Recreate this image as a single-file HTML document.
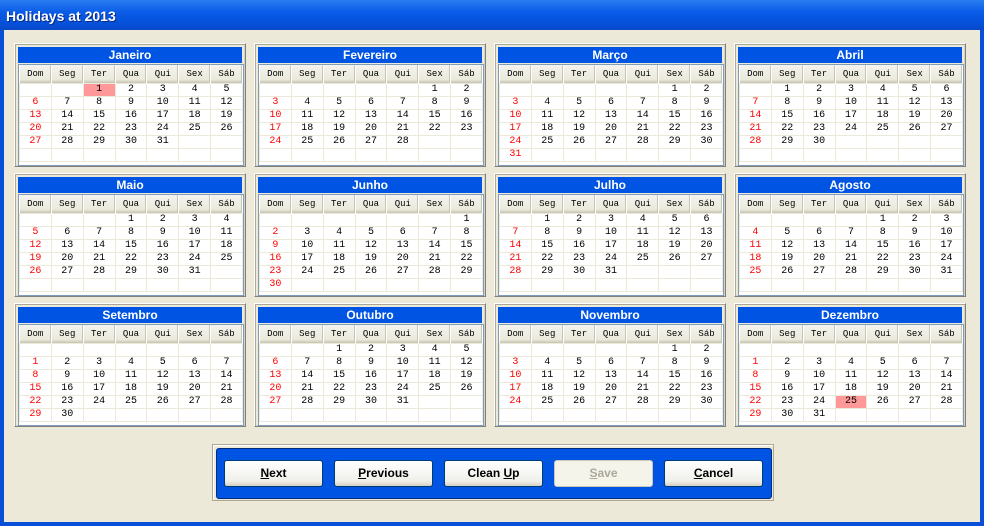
<!DOCTYPE html>
<html><head><meta charset="utf-8"><style>
*{margin:0;padding:0;box-sizing:border-box}
body{width:984px;height:526px;overflow:hidden;background:#0a4fd8;font-family:"Liberation Sans",sans-serif;position:relative}
.tb{position:absolute;left:0;top:0;width:984px;height:30px;background:linear-gradient(#2a7cf0,#0a5ce8 40%,#0450d8 80%,#0a48c8);color:#fff;font:bold 14px "Liberation Sans",sans-serif;padding:8px 0 0 6px;text-shadow:1px 1px #0a2a80}
.cl{position:absolute;left:4px;top:30px;width:976px;height:492px;background:#ece9d8}
.p{position:absolute;width:232px;height:124px;border:1px solid #fff;border-right-color:#808080;border-bottom-color:#808080;box-shadow:inset 1px 1px #aca899,inset -1px -1px #d4d0c8;background:#ece9d8}
.h{position:absolute;left:3px;top:3px;width:224px;height:16px;background:#0054e3;color:#fff;font:bold 12px "Liberation Sans",sans-serif;text-align:center;line-height:16px}
.t{position:absolute;left:3px;top:20px;width:226px;height:102px;border:1px solid #7f9db9;background:#fff}
table{border-collapse:collapse;width:224px;table-layout:fixed;font:10px "Liberation Mono",monospace}
th{height:18px;font-weight:normal;background:linear-gradient(#f4f3ee,#ebeadb 80%,#c5c2b2);border-right:1px solid #fff;box-shadow:inset -1px 0 #c9c5b5;color:#000;font-size:9px}
td{height:13px;border:1px solid #ece9d8;text-align:center;line-height:11px;color:#000}
td.r{color:#f00}
td.k{background:#f99}
.bp{position:absolute;left:208px;top:414px;width:562px;height:57px;border:1px solid #aca899;box-shadow:inset 1px 1px #fff}
.bi{position:absolute;left:3px;top:3px;width:556px;height:51px;background:#0054e3;border:1px solid #002a80;border-radius:3px}
.b{position:absolute;top:11px;width:99px;height:27px;background:linear-gradient(#fff,#f0f0ea 80%,#d6d0c5);border:1px solid #003c74;border-radius:3px;font:bold 12px "Liberation Sans",sans-serif;text-align:center;line-height:25px;color:#000}
.b.d{color:#aca899;border-color:#c9c7ba;background:#f5f4ea}
</style></head><body>
<div class="tb">Holidays at 2013</div>
<div class="cl">
<div class="p" style="left:10px;top:13px"><div class="h">Janeiro</div><div class="t"><table><tr><th>Dom</th><th>Seg</th><th>Ter</th><th>Qua</th><th>Qui</th><th>Sex</th><th>Sáb</th></tr>
<tr><td class="r"></td><td></td><td class="k">1</td><td>2</td><td>3</td><td>4</td><td>5</td></tr>
<tr><td class="r">6</td><td>7</td><td>8</td><td>9</td><td>10</td><td>11</td><td>12</td></tr>
<tr><td class="r">13</td><td>14</td><td>15</td><td>16</td><td>17</td><td>18</td><td>19</td></tr>
<tr><td class="r">20</td><td>21</td><td>22</td><td>23</td><td>24</td><td>25</td><td>26</td></tr>
<tr><td class="r">27</td><td>28</td><td>29</td><td>30</td><td>31</td><td></td><td></td></tr>
<tr><td></td><td></td><td></td><td></td><td></td><td></td><td></td></tr></table></div></div>

<div class="p" style="left:250px;top:13px"><div class="h">Fevereiro</div><div class="t"><table><tr><th>Dom</th><th>Seg</th><th>Ter</th><th>Qua</th><th>Qui</th><th>Sex</th><th>Sáb</th></tr>
<tr><td></td><td></td><td></td><td></td><td></td><td>1</td><td>2</td></tr>
<tr><td class="r">3</td><td>4</td><td>5</td><td>6</td><td>7</td><td>8</td><td>9</td></tr>
<tr><td class="r">10</td><td>11</td><td>12</td><td>13</td><td>14</td><td>15</td><td>16</td></tr>
<tr><td class="r">17</td><td>18</td><td>19</td><td>20</td><td>21</td><td>22</td><td>23</td></tr>
<tr><td class="r">24</td><td>25</td><td>26</td><td>27</td><td>28</td><td></td><td></td></tr>
<tr><td></td><td></td><td></td><td></td><td></td><td></td><td></td></tr></table></div></div>

<div class="p" style="left:490px;top:13px"><div class="h">Março</div><div class="t"><table><tr><th>Dom</th><th>Seg</th><th>Ter</th><th>Qua</th><th>Qui</th><th>Sex</th><th>Sáb</th></tr>
<tr><td></td><td></td><td></td><td></td><td></td><td>1</td><td>2</td></tr>
<tr><td class="r">3</td><td>4</td><td>5</td><td>6</td><td>7</td><td>8</td><td>9</td></tr>
<tr><td class="r">10</td><td>11</td><td>12</td><td>13</td><td>14</td><td>15</td><td>16</td></tr>
<tr><td class="r">17</td><td>18</td><td>19</td><td>20</td><td>21</td><td>22</td><td>23</td></tr>
<tr><td class="r">24</td><td>25</td><td>26</td><td>27</td><td>28</td><td>29</td><td>30</td></tr>
<tr><td class="r">31</td><td></td><td></td><td></td><td></td><td></td><td></td></tr></table></div></div>

<div class="p" style="left:730px;top:13px"><div class="h">Abril</div><div class="t"><table><tr><th>Dom</th><th>Seg</th><th>Ter</th><th>Qua</th><th>Qui</th><th>Sex</th><th>Sáb</th></tr>
<tr><td></td><td>1</td><td>2</td><td>3</td><td>4</td><td>5</td><td>6</td></tr>
<tr><td class="r">7</td><td>8</td><td>9</td><td>10</td><td>11</td><td>12</td><td>13</td></tr>
<tr><td class="r">14</td><td>15</td><td>16</td><td>17</td><td>18</td><td>19</td><td>20</td></tr>
<tr><td class="r">21</td><td>22</td><td>23</td><td>24</td><td>25</td><td>26</td><td>27</td></tr>
<tr><td class="r">28</td><td>29</td><td>30</td><td></td><td></td><td></td><td></td></tr>
<tr><td></td><td></td><td></td><td></td><td></td><td></td><td></td></tr></table></div></div>

<div class="p" style="left:10px;top:143px"><div class="h">Maio</div><div class="t"><table><tr><th>Dom</th><th>Seg</th><th>Ter</th><th>Qua</th><th>Qui</th><th>Sex</th><th>Sáb</th></tr>
<tr><td></td><td></td><td></td><td>1</td><td>2</td><td>3</td><td>4</td></tr>
<tr><td class="r">5</td><td>6</td><td>7</td><td>8</td><td>9</td><td>10</td><td>11</td></tr>
<tr><td class="r">12</td><td>13</td><td>14</td><td>15</td><td>16</td><td>17</td><td>18</td></tr>
<tr><td class="r">19</td><td>20</td><td>21</td><td>22</td><td>23</td><td>24</td><td>25</td></tr>
<tr><td class="r">26</td><td>27</td><td>28</td><td>29</td><td>30</td><td>31</td><td></td></tr>
<tr><td></td><td></td><td></td><td></td><td></td><td></td><td></td></tr></table></div></div>

<div class="p" style="left:250px;top:143px"><div class="h">Junho</div><div class="t"><table><tr><th>Dom</th><th>Seg</th><th>Ter</th><th>Qua</th><th>Qui</th><th>Sex</th><th>Sáb</th></tr>
<tr><td></td><td></td><td></td><td></td><td></td><td></td><td>1</td></tr>
<tr><td class="r">2</td><td>3</td><td>4</td><td>5</td><td>6</td><td>7</td><td>8</td></tr>
<tr><td class="r">9</td><td>10</td><td>11</td><td>12</td><td>13</td><td>14</td><td>15</td></tr>
<tr><td class="r">16</td><td>17</td><td>18</td><td>19</td><td>20</td><td>21</td><td>22</td></tr>
<tr><td class="r">23</td><td>24</td><td>25</td><td>26</td><td>27</td><td>28</td><td>29</td></tr>
<tr><td class="r">30</td><td></td><td></td><td></td><td></td><td></td><td></td></tr></table></div></div>

<div class="p" style="left:490px;top:143px"><div class="h">Julho</div><div class="t"><table><tr><th>Dom</th><th>Seg</th><th>Ter</th><th>Qua</th><th>Qui</th><th>Sex</th><th>Sáb</th></tr>
<tr><td></td><td>1</td><td>2</td><td>3</td><td>4</td><td>5</td><td>6</td></tr>
<tr><td class="r">7</td><td>8</td><td>9</td><td>10</td><td>11</td><td>12</td><td>13</td></tr>
<tr><td class="r">14</td><td>15</td><td>16</td><td>17</td><td>18</td><td>19</td><td>20</td></tr>
<tr><td class="r">21</td><td>22</td><td>23</td><td>24</td><td>25</td><td>26</td><td>27</td></tr>
<tr><td class="r">28</td><td>29</td><td>30</td><td>31</td><td></td><td></td><td></td></tr>
<tr><td></td><td></td><td></td><td></td><td></td><td></td><td></td></tr></table></div></div>

<div class="p" style="left:730px;top:143px"><div class="h">Agosto</div><div class="t"><table><tr><th>Dom</th><th>Seg</th><th>Ter</th><th>Qua</th><th>Qui</th><th>Sex</th><th>Sáb</th></tr>
<tr><td></td><td></td><td></td><td></td><td>1</td><td>2</td><td>3</td></tr>
<tr><td class="r">4</td><td>5</td><td>6</td><td>7</td><td>8</td><td>9</td><td>10</td></tr>
<tr><td class="r">11</td><td>12</td><td>13</td><td>14</td><td>15</td><td>16</td><td>17</td></tr>
<tr><td class="r">18</td><td>19</td><td>20</td><td>21</td><td>22</td><td>23</td><td>24</td></tr>
<tr><td class="r">25</td><td>26</td><td>27</td><td>28</td><td>29</td><td>30</td><td>31</td></tr>
<tr><td></td><td></td><td></td><td></td><td></td><td></td><td></td></tr></table></div></div>

<div class="p" style="left:10px;top:273px"><div class="h">Setembro</div><div class="t"><table><tr><th>Dom</th><th>Seg</th><th>Ter</th><th>Qua</th><th>Qui</th><th>Sex</th><th>Sáb</th></tr>
<tr><td></td><td></td><td></td><td></td><td></td><td></td><td></td></tr>
<tr><td class="r">1</td><td>2</td><td>3</td><td>4</td><td>5</td><td>6</td><td>7</td></tr>
<tr><td class="r">8</td><td>9</td><td>10</td><td>11</td><td>12</td><td>13</td><td>14</td></tr>
<tr><td class="r">15</td><td>16</td><td>17</td><td>18</td><td>19</td><td>20</td><td>21</td></tr>
<tr><td class="r">22</td><td>23</td><td>24</td><td>25</td><td>26</td><td>27</td><td>28</td></tr>
<tr><td class="r">29</td><td>30</td><td></td><td></td><td></td><td></td><td></td></tr></table></div></div>

<div class="p" style="left:250px;top:273px"><div class="h">Outubro</div><div class="t"><table><tr><th>Dom</th><th>Seg</th><th>Ter</th><th>Qua</th><th>Qui</th><th>Sex</th><th>Sáb</th></tr>
<tr><td></td><td></td><td>1</td><td>2</td><td>3</td><td>4</td><td>5</td></tr>
<tr><td class="r">6</td><td>7</td><td>8</td><td>9</td><td>10</td><td>11</td><td>12</td></tr>
<tr><td class="r">13</td><td>14</td><td>15</td><td>16</td><td>17</td><td>18</td><td>19</td></tr>
<tr><td class="r">20</td><td>21</td><td>22</td><td>23</td><td>24</td><td>25</td><td>26</td></tr>
<tr><td class="r">27</td><td>28</td><td>29</td><td>30</td><td>31</td><td></td><td></td></tr>
<tr><td></td><td></td><td></td><td></td><td></td><td></td><td></td></tr></table></div></div>

<div class="p" style="left:490px;top:273px"><div class="h">Novembro</div><div class="t"><table><tr><th>Dom</th><th>Seg</th><th>Ter</th><th>Qua</th><th>Qui</th><th>Sex</th><th>Sáb</th></tr>
<tr><td></td><td></td><td></td><td></td><td></td><td>1</td><td>2</td></tr>
<tr><td class="r">3</td><td>4</td><td>5</td><td>6</td><td>7</td><td>8</td><td>9</td></tr>
<tr><td class="r">10</td><td>11</td><td>12</td><td>13</td><td>14</td><td>15</td><td>16</td></tr>
<tr><td class="r">17</td><td>18</td><td>19</td><td>20</td><td>21</td><td>22</td><td>23</td></tr>
<tr><td class="r">24</td><td>25</td><td>26</td><td>27</td><td>28</td><td>29</td><td>30</td></tr>
<tr><td></td><td></td><td></td><td></td><td></td><td></td><td></td></tr></table></div></div>

<div class="p" style="left:730px;top:273px"><div class="h">Dezembro</div><div class="t"><table><tr><th>Dom</th><th>Seg</th><th>Ter</th><th>Qua</th><th>Qui</th><th>Sex</th><th>Sáb</th></tr>
<tr><td></td><td></td><td></td><td></td><td></td><td></td><td></td></tr>
<tr><td class="r">1</td><td>2</td><td>3</td><td>4</td><td>5</td><td>6</td><td>7</td></tr>
<tr><td class="r">8</td><td>9</td><td>10</td><td>11</td><td>12</td><td>13</td><td>14</td></tr>
<tr><td class="r">15</td><td>16</td><td>17</td><td>18</td><td>19</td><td>20</td><td>21</td></tr>
<tr><td class="r">22</td><td>23</td><td>24</td><td class="k">25</td><td>26</td><td>27</td><td>28</td></tr>
<tr><td class="r">29</td><td>30</td><td>31</td><td></td><td></td><td></td><td></td></tr></table></div></div>

<div class="bp"><div class="bi">
<div class="b" style="left:7px"><u>N</u>ext</div>
<div class="b" style="left:117px"><u>P</u>revious</div>
<div class="b" style="left:227px">Clean <u>U</u>p</div>
<div class="b d" style="left:337px"><u>S</u>ave</div>
<div class="b" style="left:447px"><u>C</u>ancel</div>
</div></div>
</div>
</body></html>
